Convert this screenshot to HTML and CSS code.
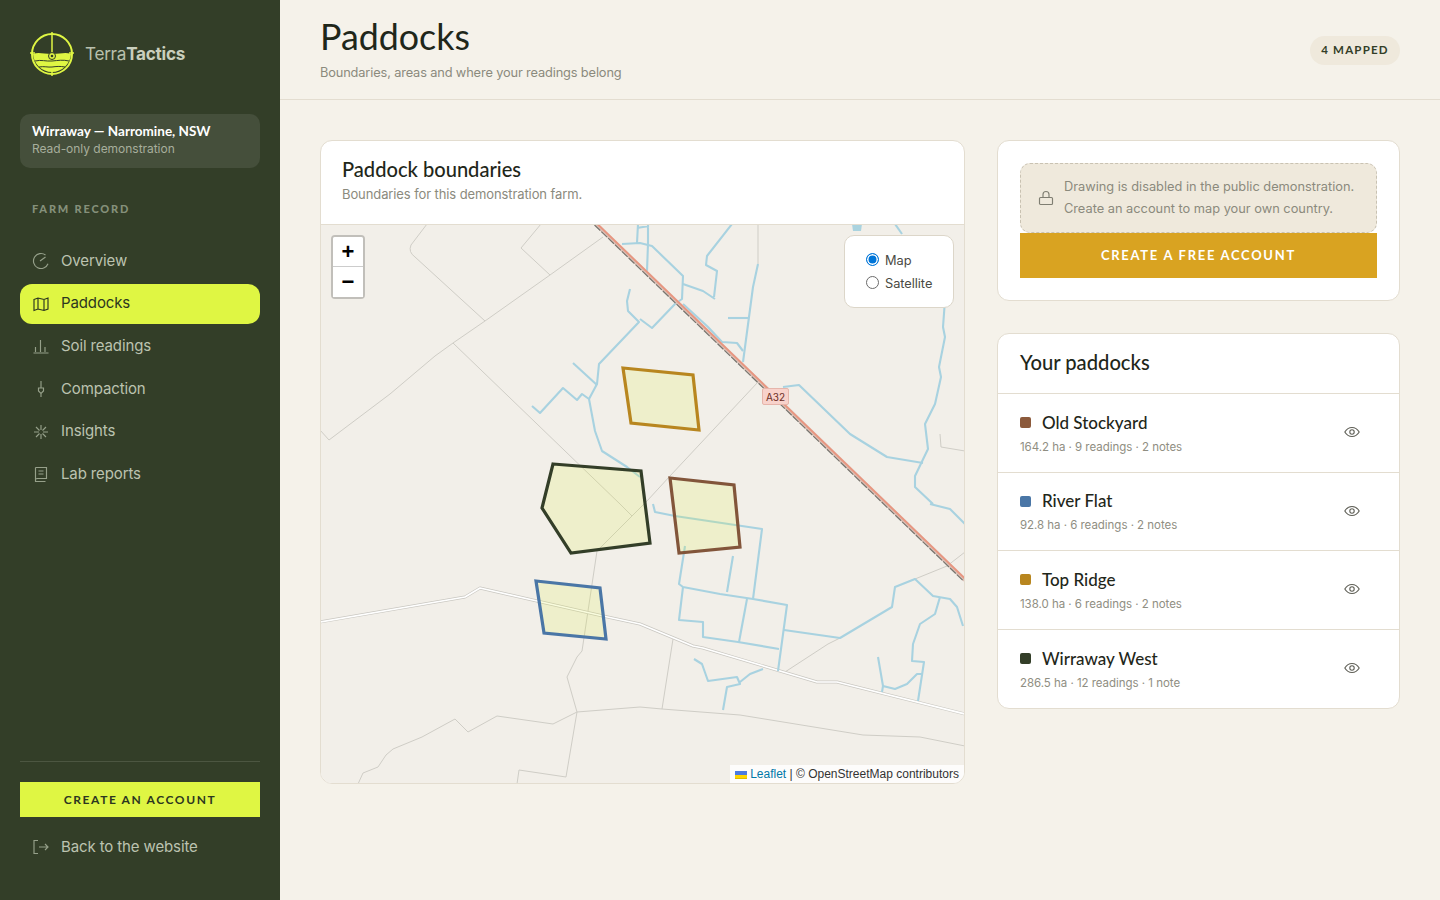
FILE: index.html
```html
<!DOCTYPE html>
<html lang="en">
<head>
<meta charset="utf-8">
<title>Paddocks – TerraTactics</title>
<link rel="stylesheet" href="styles.css">
</head>
<body>
<div class="app">
  <aside class="sidebar">
    <div class="brand">
      <svg class="logo" viewBox="0 0 44 44" width="44" height="44">
        <path class="logo-fill" d="M3 22c6-2 10 0 19 0s13-2 19 0c-.6 10-9 18-19 18S3.600 32 3 22z"/>
        <circle class="logo-ring" cx="22" cy="22" r="20"/>
        <path class="logo-line" d="M22 0v23M0 21h5M39 21h5M22 38v6"/>
        <path class="logo-dark" d="M5 29c6-1.500 11 .5 17 0s11-1.500 17 0M9 35c5-1 9 .5 13 0s8-1 13 0"/>
        <circle class="logo-eye" cx="22" cy="24" r="3.500"/>
        <circle class="logo-pupil" cx="22" cy="24" r="1.300"/>
      </svg>
      <span class="brand-name">Terra<b>Tactics</b></span>
    </div>
    <div class="farm-card">
      <div class="farm-name">Wirraway — Narromine, NSW</div>
      <div class="farm-sub">Read-only demonstration</div>
    </div>
    <div class="nav-label">FARM RECORD</div>
    <nav class="nav">
      <a class="nav-item"><svg class="ico" viewBox="0 0 18 18"><path d="M16 11.700A7.500 7.500 0 1 1 13.500 3M8 9l5.500-4"/></svg><span class="nav-text">Overview</span></a>
      <a class="nav-item active"><svg class="ico" viewBox="0 0 18 18"><path d="M2 4.500l4-1.500 6 1.500 4-1.500v11l-4 1.500-6-1.500-4 1.500zM6 3v11M12 4.500v11"/></svg><span class="nav-text">Paddocks</span></a>
      <a class="nav-item"><svg class="ico" viewBox="0 0 18 18"><path d="M1.500 16h15M3.500 15v-5M8.500 15V3M13 15v-5"/></svg><span class="nav-text">Soil readings</span></a>
      <a class="nav-item"><svg class="ico" viewBox="0 0 18 18"><path d="M9 1v7M9 13v4M6.500 8h5v3L9 13.500 6.500 11z"/></svg><span class="nav-text">Compaction</span></a>
      <a class="nav-item"><svg class="ico" viewBox="0 0 18 18"><path d="M9 2v5M9 11v5M2 9h5M11 9h5M4 4l3.500 3.500M10.500 10.500L14 14M14 4l-3.500 3.500M7.500 10.500L4 14"/></svg><span class="nav-text">Insights</span></a>
      <a class="nav-item"><svg class="ico" viewBox="0 0 18 18"><path d="M3.500 2.500h11v11H5.500l-2 .5v2.500h10M3.500 2.500v11.500M6.500 6h5M6.500 9h5"/></svg><span class="nav-text">Lab reports</span></a>
    </nav>
    <div class="side-foot">
      <a class="btn-lime">CREATE AN ACCOUNT</a>
      <a class="nav-item"><svg class="ico" viewBox="0 0 18 18"><path d="M6 2.500H2v13h4M7 9h9M13 6l3 3-3 3"/></svg><span class="nav-text">Back to the website</span></a>
    </div>
  </aside>

  <main class="main">
    <header class="topbar">
      <div>
        <h1 class="title">Paddocks</h1>
        <p class="subtitle">Boundaries, areas and where your readings belong</p>
      </div>
      <span class="pill">4 MAPPED</span>
    </header>
    <div class="content">
      <section class="card map-card">
        <div class="map-head">
          <h2 class="map-title">Paddock boundaries</h2>
          <p class="map-sub">Boundaries for this demonstration farm.</p>
        </div>
        <div class="map">
          <svg class="map-svg" viewBox="321 225 643 558" width="643" height="558">
            <g class="thin">
              <path d="M427 224L411 245Q408 252 415 257L485 321"/>
              <path d="M541 224L521 248L550 275"/>
              <path d="M603 237L550 275L485 321L453 343L435 356L390 394L329 440L320 430"/>
              <path d="M453 343L620 504L632 516"/>
              <path d="M758 382L670 476L647 501L597 551L582 651L577 657L567 677L577 712L566 777L519 770L517 784"/>
              <path d="M758 224V264"/>
              <path d="M358 784L363 773L378 767L386 755L393 749L422 737L455 719L468 732L497 716L553 724L577 712L640 707L662 709L740 715L863 735L920 737L965 746"/>
              <path d="M673 639L662 709"/>
              <path d="M785 672L828 644L840 638"/>
              <path d="M915 579L947 566L965 552"/>
              <path d="M940 434L941 447L965 451"/>
            </g>
            <g class="road">
              <path class="road-a" d="M320 622L465 597L480 588L537 601L603 616L640 624L693 646L703 648L817 682L837 682L965 714"/>
              <path class="road-b" d="M320 622L465 597L480 588L537 601L603 616L640 624L693 646L703 648L817 682L837 682L965 714"/>
            </g>
            <path class="pond" d="M852 224h10l-1 7h-8z"/>
            <g class="water">
              <path d="M630 289L627 301L628 311L639 322L599 364L597 384L589 399L595 431L602 451L627 467L640 477"/>
              <path d="M573 363L597 385"/>
              <path d="M532 406L540 413L563 388L577 400L582 394L589 399"/>
              <path d="M622 244L640 243L652 246L683 276L682 299L675 304L652 328L640 319"/>
              <path d="M638 224L637 243M648 224L648 244L647 271M637 228L649 226"/>
              <path d="M683 284L703 291L715 299"/>
              <path d="M732 224L707 256L706 265L717 271L714 297"/>
              <path d="M728 318H748"/>
              <path d="M758 264L753 287L743 362"/>
              <path d="M683 304L708 327L722 342L737 343L743 351"/>
              <path d="M783 387L799 385L850 434L887 457L923 463"/>
              <path d="M895 224L902 234"/>
              <path d="M945 300L943 327L945 337L939 367L941 377L935 404L925 424L928 449L915 476L915 487L933 504"/>
              <path d="M930 504L950 509L965 524"/>
              <path d="M653 504L655 512L675 516L762 529L753 599"/>
              <path d="M685 546L679 584L683 587L720 594L753 599L787 605L778 671"/>
              <path d="M683 587L679 620L703 622L703 637L738 642L779 649"/>
              <path d="M747 599L739 642"/>
              <path d="M733 556L727 592"/>
              <path d="M784 630L840 638L892 607L895 587L915 579L933 596L950 599L957 607L963 626"/>
              <path d="M940 597L935 614L920 624L913 644L912 661L924 662L918 701"/>
              <path d="M878 657L883 686L882 692M883 686L895 689L907 684L917 674L923 674"/>
              <path d="M694 659L702 664L708 681L737 677L740 684L727 687L723 710M740 682L750 674L763 669"/>
            </g>
            <path class="hw-edge" d="M596 224L965 580"/>
            <path class="hw" d="M596.800 223.500L965.800 579.500"/>
            <path class="hw-rail" d="M594.500 225L963.500 581"/>
            <polygon class="pad pad-gold" points="623,368 693,375 699,430 631,423"/>
            <polygon class="pad pad-green" points="553,464 641,471 650,543 571,553 542,508"/>
            <polygon class="pad pad-brown" points="670,478 734,485 740,547 679,553"/>
            <polygon class="pad pad-blue" points="536,581 600,588 606,639 544,633"/>
          </svg>
          <span class="shield">A32</span>
          <div class="zoom">
            <a class="zoom-btn zoom-in">+</a>
            <a class="zoom-btn">−</a>
          </div>
          <div class="layers">
            <label class="layer"><span class="radio on"></span>Map</label>
            <label class="layer"><span class="radio"></span>Satellite</label>
          </div>
          <div class="attrib"><svg class="flag" viewBox="0 0 12 8" width="12" height="8"><path fill="#4C7BE1" d="M0 0h12v4H0z"/><path fill="#FFD500" d="M0 4h12v3H0z"/><path fill="#E0BC00" d="M0 7h12v1H0z"/></svg> <a class="leaflet">Leaflet</a> | © OpenStreetMap contributors</div>
        </div>
      </section>

      <div class="side-col">
        <section class="card notice-card">
          <div class="notice">
            <svg class="lock" viewBox="0 0 16 16" width="16" height="16"><path d="M2.500 7.500h11a1 1 0 0 1 1 1v5a1 1 0 0 1-1 1h-11a1 1 0 0 1-1-1v-5a1 1 0 0 1 1-1zM5 7.500V4.500a3 3 0 0 1 6 0v3"/></svg>
            <p class="notice-text">Drawing is disabled in the public demonstration. Create an account to map your own country.</p>
          </div>
          <a class="btn-gold">CREATE A FREE ACCOUNT</a>
        </section>
        <section class="card list-card">
          <h2 class="list-title">Your paddocks</h2>
          <div class="row">
            <div class="row-body">
              <div class="row-name"><i class="swatch sw-brown"></i>Old Stockyard</div>
              <div class="row-meta">164.2 ha · 9 readings · 2 notes</div>
            </div>
            <svg class="eye" viewBox="0 0 16 16" width="16" height="16"><path d="M.800 8S3.500 3.500 8 3.500 15.200 8 15.200 8 12.500 12.500 8 12.500.800 8 .800 8z"/><circle cx="8" cy="8" r="2.200"/></svg>
          </div>
          <div class="row">
            <div class="row-body">
              <div class="row-name"><i class="swatch sw-blue"></i>River Flat</div>
              <div class="row-meta">92.8 ha · 6 readings · 2 notes</div>
            </div>
            <svg class="eye" viewBox="0 0 16 16" width="16" height="16"><path d="M.800 8S3.500 3.500 8 3.500 15.200 8 15.200 8 12.500 12.500 8 12.500.800 8 .800 8z"/><circle cx="8" cy="8" r="2.200"/></svg>
          </div>
          <div class="row">
            <div class="row-body">
              <div class="row-name"><i class="swatch sw-gold"></i>Top Ridge</div>
              <div class="row-meta">138.0 ha · 6 readings · 2 notes</div>
            </div>
            <svg class="eye" viewBox="0 0 16 16" width="16" height="16"><path d="M.800 8S3.500 3.500 8 3.500 15.200 8 15.200 8 12.500 12.500 8 12.500.800 8 .800 8z"/><circle cx="8" cy="8" r="2.200"/></svg>
          </div>
          <div class="row">
            <div class="row-body">
              <div class="row-name"><i class="swatch sw-green"></i>Wirraway West</div>
              <div class="row-meta">286.5 ha · 12 readings · 1 note</div>
            </div>
            <svg class="eye" viewBox="0 0 16 16" width="16" height="16"><path d="M.800 8S3.500 3.500 8 3.500 15.200 8 15.200 8 12.500 12.500 8 12.500.800 8 .800 8z"/><circle cx="8" cy="8" r="2.200"/></svg>
          </div>
        </section>
      </div>
    </div>
  </main>
</div>
</body>
</html>
```
FILE: styles.css
```css
* { box-sizing: border-box; }
html, body { margin: 0; height: 100%; }
body { font-family: "Inter", "Noto Sans", sans-serif; background: #f5f2ea; color: #1f271a; overflow: hidden; }
h1, h2, p { margin: 0; }
.app { display: flex; height: 900px; }

.sidebar { width: 280px; flex: none; background: #333e28; display: flex; flex-direction: column; padding: 32px 20px 33px; }
.brand { display: flex; align-items: center; gap: 11px; padding-left: 10px; height: 44px; margin-bottom: 38px; }
.logo { flex: none; }
.logo-fill { fill: #dff643; }
.logo-ring { fill: none; stroke: #dff643; stroke-width: 2; }
.logo-line { fill: none; stroke: #dff643; stroke-width: 1.500; }
.logo-dark { fill: none; stroke: #333e28; stroke-width: 1; }
.logo-eye { fill: #dff643; stroke: #333e28; stroke-width: 1; }
.logo-pupil { fill: #333e28; }
.brand-name { font-size: 17.200px; line-height: 20px; color: #b9c0ad; letter-spacing: -.3px; }
.brand-name b { font-weight: 700; color: #c9cfbe; }
.farm-card { background: #454f3b; border-radius: 10px; height: 54px; padding: 9px 12px; margin-bottom: 34px; }
.farm-name { font-family: "Lato", sans-serif; font-size: 13.500px; line-height: 17px; font-weight: 700; color: #fff; }
.farm-sub { font-size: 12px; line-height: 17px; color: #a7ae9c; letter-spacing: -.03px; }
.nav-label { font-family: "Lato", sans-serif; font-size: 11px; line-height: 14px; font-weight: 900; letter-spacing: 1.800px; color: #85907a; padding-left: 12px; margin-bottom: 25px; }
.nav { display: flex; flex-direction: column; gap: 2.700px; }
.nav-item { display: flex; align-items: center; gap: 11px; height: 40px; padding-left: 12px; border-radius: 12px; font-size: 15px; color: #bcc3b0; letter-spacing: -.12px; }
.nav-text { padding-bottom: 2px; }
.nav-item.active { background: #dff643; color: #2c3620; }
.ico { width: 18px; height: 18px; flex: none; fill: none; stroke: #96a08a; stroke-width: 1.150; }
.active .ico { stroke: #2c3620; }
.side-foot { margin-top: auto; border-top: 1px solid #4c5641; padding-top: 20px; display: flex; flex-direction: column; gap: 10px; }
.btn-lime { display: flex; align-items: center; justify-content: center; height: 35px; background: #dff643; color: #2c3620; font-family: "Lato", sans-serif; font-size: 12px; font-weight: 700; letter-spacing: 1.600px; }

.main { flex: 1; min-width: 0; }
.topbar { height: 100px; border-bottom: 1px solid #e3ddd0; padding: 15px 40px 0; display: flex; justify-content: space-between; align-items: flex-start; }
.title { font-family: "Lato", sans-serif; font-weight: 400; font-size: 35.800px; line-height: 44px; color: #1f271a; }
.subtitle { font-size: 12.800px; line-height: 20px; color: #8b8a7d; margin-top: 4px; letter-spacing: -.14px; }
.pill { margin-top: 21px; height: 29px; width: 90px; padding-bottom: 2px; display: flex; align-items: center; justify-content: center; border-radius: 15px; background: #efe9dc; font-family: "Lato", sans-serif; font-size: 11.500px; font-weight: 700; letter-spacing: 1.200px; color: #333e28; }
.content { padding: 40px 40px 0; display: grid; grid-template-columns: 1.6fr 1fr; gap: 32px; align-items: start; }
.card { background: #fff; border: 1px solid #e3ddd0; border-radius: 12px; }

.map-card { overflow: hidden; }
.map-head { height: 84px; padding: 17px 21px 0; border-bottom: 1px solid #e3ddd0; }
.map-title { font-family: "Lato", sans-serif; font-weight: 500; font-size: 20.100px; line-height: 22px; }
.map-sub { font-size: 13px; line-height: 20px; color: #8b8a7d; margin-top: 4px; letter-spacing: -.1px; }
.map { position: relative; height: 558px; background: #f2efe9; overflow: hidden; }
.map-svg { display: block; }
.thin path { fill: none; stroke: #cfcdc6; stroke-width: 1; }
.road path { fill: none; stroke-linejoin: round; }
.road-a { stroke: #c9c7c1; stroke-width: 3; }
.road-b { stroke: #fff; stroke-width: 1.700; }
.pond { fill: #aad3df; }
.water path { fill: none; stroke: #a8d2e0; stroke-width: 2.100; stroke-linejoin: round; }
.hw-edge { fill: none; stroke: #dcc0b6; stroke-width: 4; }
.hw { fill: none; stroke: #e9957f; stroke-width: 1.800; }
.hw-rail { fill: none; stroke: #77756f; stroke-width: 1.200; stroke-dasharray: 8 1.500; }
.pad { fill: #e0f040; fill-opacity: .18; stroke-width: 3.200; stroke-linejoin: miter; }
.pad-gold { stroke: #b8861f; }
.pad-green { stroke: #333e28; }
.pad-brown { stroke: #82553a; }
.pad-blue { stroke: #4a76a6; }
.shield { position: absolute; left: 441px; top: 163px; width: 27px; height: 17px; display: flex; align-items: center; justify-content: center; background: #f8d2cb; border: 1px solid #e6b5ab; border-radius: 2px; font-family: "Inter", sans-serif; font-size: 10px; color: #6b2e26; }
.zoom { position: absolute; left: 10px; top: 10px; width: 34px; border: 2px solid rgba(0,0,0,.2); border-radius: 4px; background-clip: padding-box; }
.zoom-btn { display: flex; align-items: center; justify-content: center; width: 30px; height: 30px; background: #fff; color: #000; font-family: "Liberation Sans", sans-serif; font-size: 22px; font-weight: 700; line-height: 30px; }
.zoom-in { border-bottom: 1px solid #ccc; border-radius: 2px 2px 0 0; }
.layers { position: absolute; left: 523px; top: 10px; width: 110px; height: 73px; background: #fff; border: 1px solid #dcd6c9; border-radius: 10px; padding: 14px 0 0 21px; display: flex; flex-direction: column; gap: 3px; }
.layer { display: flex; align-items: center; gap: 6px; height: 20px; font-size: 12.800px; color: #4a4a44; letter-spacing: -.05px; }
.radio { width: 13px; height: 13px; border-radius: 50%; border: 1px solid #6b6b6b; background: #fff; flex: none; margin-top: -2px; }
.radio.on { border: 1px solid #0075d8; background: #0075d8; box-shadow: inset 0 0 0 1.500px #fff; }
.attrib { position: absolute; right: 0; bottom: 0; height: 18px; padding: 0 5px; background: rgba(255,255,255,.8); font-family: "Liberation Sans", sans-serif; font-size: 12px; line-height: 18px; color: #333; white-space: nowrap; }
.flag { vertical-align: -0.500px; }
.leaflet { color: #0078a8; }

.side-col { display: flex; flex-direction: column; gap: 32px; }
.notice-card { padding: 22px; }
.notice { display: flex; align-items: center; gap: 10px; height: 70px; padding: 0 12px 0 17px; background: #efe9dc; border: 1px dashed #c9c2b2; border-radius: 10px; }
.lock { flex: none; fill: none; stroke: #7f7e72; stroke-width: 1.150; }
.notice-text { font-size: 12.800px; line-height: 22.500px; color: #8b8a7d; }
.btn-gold { display: flex; align-items: center; justify-content: center; height: 45px; background: #d9a321; color: #fff; font-family: "Lato", sans-serif; font-size: 13px; font-weight: 700; letter-spacing: 1.700px; padding-bottom: 2px; }
.list-title { font-family: "Lato", sans-serif; font-weight: 500; font-size: 20.200px; line-height: 56px; height: 60px; padding-left: 22px; border-bottom: 1px solid #e3ddd0; }
.row { display: flex; align-items: center; justify-content: space-between; height: 78.500px; padding: 0 39px 0 22px; border-bottom: 1px solid #e3ddd0; }
.row:last-child { border-bottom: 0; height: 78px; }
.row-name { display: flex; align-items: center; font-family: "Lato", sans-serif; font-weight: 500; font-size: 17px; line-height: 24px; color: #1f271a; }
.swatch { width: 11px; height: 11px; border-radius: 2px; margin-right: 11px; flex: none; }
.sw-brown { background: #8c5a3c; }
.sw-blue { background: #4a76a6; }
.sw-gold { background: #b8861f; }
.sw-green { background: #333e28; }
.row-meta { font-size: 11.500px; line-height: 16px; color: #8f8e82; margin-top: 4px; letter-spacing: -.03px; }
.eye { fill: none; stroke: #5f5f56; stroke-width: 1.100; flex: none; margin-top: -1px; }
```
